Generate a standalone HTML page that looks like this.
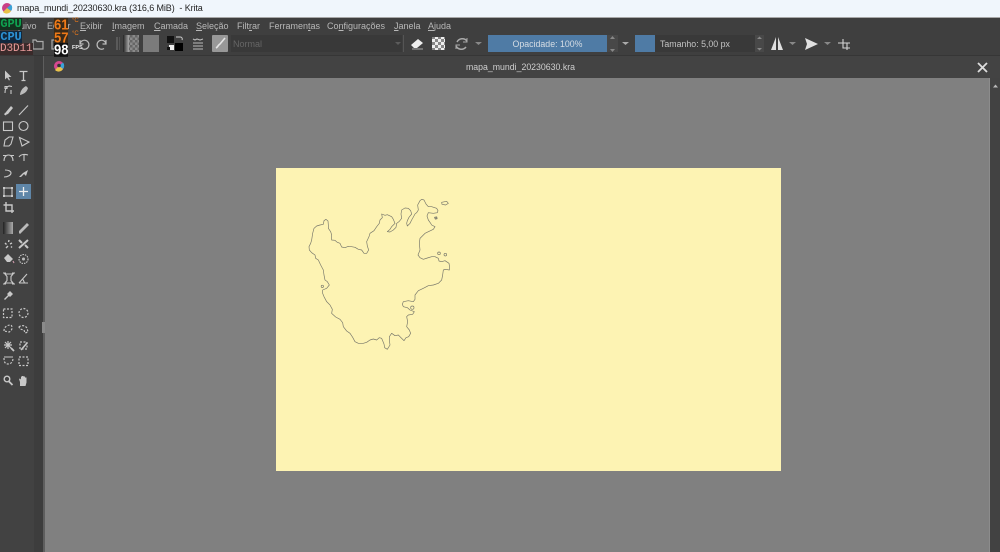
<!DOCTYPE html>
<html><head><meta charset="utf-8"><style>
*{margin:0;padding:0;box-sizing:border-box}
html,body{width:1000px;height:552px;overflow:hidden;background:#414141;font-family:"Liberation Sans",sans-serif}
#w{position:absolute;left:0;top:0;width:1000px;height:552px;filter:blur(.35px)}
.a{position:absolute;white-space:nowrap}
.m{top:20px;font-size:9px;color:#b8b8b8;line-height:12px}
.m u{text-decoration-thickness:1px}
svg{position:absolute;left:0;top:0}
.o{font-family:"Liberation Mono",monospace;font-weight:bold;line-height:12px}
.n{font-family:"Liberation Sans",sans-serif;font-weight:bold;font-size:13px;line-height:12px;transform:scaleY(1.15);transform-origin:left top}
</style></head><body><div id="w">
<div class="a" style="left:0;top:0;width:1000px;height:17px;background:#f0f6fc"></div>
<div class="a" style="left:0;top:17px;width:1000px;height:1px;background:#a8a8a8"></div>
<div class="a" style="left:0;top:18px;width:1000px;height:37px;background:#3f3f3f"></div>
<div class="a" style="left:0;top:55px;width:1000px;height:1px;background:#363636"></div>
<div class="a" style="left:0;top:56px;width:43px;height:496px;background:#424242"></div>
<div class="a" style="left:34px;top:56px;width:9px;height:496px;background:#3d3d3d"></div>
<div class="a" style="left:43px;top:56px;width:2px;height:496px;background:#5e5e5e"></div>
<div class="a" style="left:44px;top:56px;width:956px;height:22px;background:#434343"></div>
<div class="a" style="left:45px;top:78px;width:945px;height:474px;background:#808080"></div>
<div class="a" style="left:990px;top:78px;width:10px;height:474px;background:#424242"></div>
<div class="a" style="left:276px;top:168px;width:505px;height:303px;background:#fdf3b3"></div>
<div class="a" style="left:17px;top:2px;font-size:9px;line-height:13px;letter-spacing:-.1px;color:#222">mapa_mundi_20230630.kra (316,6 MiB)&nbsp; - Krita</div>

<div class="a m" style="left:6px">Arquivo</div>
<div class="a m" style="left:47px">Editar</div>
<div class="a m" style="left:80px"><u>E</u>xibir</div>
<div class="a m" style="left:112px"><u>I</u>magem</div>
<div class="a m" style="left:154px"><u>C</u>amada</div>
<div class="a m" style="left:196px"><u>S</u>eleção</div>
<div class="a m" style="left:237px">Filt<u>r</u>ar</div>
<div class="a m" style="left:269px">Ferramen<u>t</u>as</div>
<div class="a m" style="left:327px">Co<u>n</u>figurações</div>
<div class="a m" style="left:394px"><u>J</u>anela</div>
<div class="a m" style="left:428px"><u>A</u>juda</div>

<!-- toolbar controls -->
<div class="a" style="left:231px;top:35px;width:171px;height:17px;background:#393939"></div>
<div class="a" style="left:233px;top:38px;font-size:9px;color:#666;line-height:12px">Normal</div>
<div class="a" style="left:488px;top:35px;width:119px;height:17px;background:#4f7ba5"></div>
<div class="a" style="left:488px;top:38px;width:119px;text-align:center;font-size:8.8px;color:#d6dde4;line-height:12px">Opacidade: 100%</div>
<div class="a" style="left:607px;top:35px;width:11px;height:17px;background:#484848"></div>
<div class="a" style="left:635px;top:35px;width:20px;height:17px;background:#4f7ba5"></div>
<div class="a" style="left:655px;top:35px;width:100px;height:17px;background:#393939"></div>
<div class="a" style="left:660px;top:38px;font-size:8.8px;color:#c4c4c4;line-height:12px">Tamanho: 5,00 px</div>
<div class="a" style="left:755px;top:35px;width:9px;height:17px;background:#484848"></div>
<div class="a" style="left:466px;top:61px;width:109px;text-align:center;font-size:8.75px;color:#cfcfcf;line-height:12px">mapa_mundi_20230630.kra</div>

<svg width="1000" height="552" viewBox="0 0 1000 552" fill="none">
<defs>
<linearGradient id="g" x1="0" x2="1" y1="0" y2="0"><stop offset="0" stop-color="#222"/><stop offset="1" stop-color="#aaa"/></linearGradient>
<pattern id="ck" width="6" height="6" patternUnits="userSpaceOnUse"><rect width="6" height="6" fill="#eee"/><rect width="3" height="3" fill="#888"/><rect x="3" y="3" width="3" height="3" fill="#888"/></pattern>
<pattern id="ck2" width="5" height="5" patternUnits="userSpaceOnUse"><rect width="5" height="5" fill="#8a8a8a"/><rect width="2.500" height="2.500" fill="#666"/><rect x="2.500" y="2.500" width="2.500" height="2.500" fill="#666"/></pattern>
</defs>

<!-- krita logo titlebar -->
<circle cx="7" cy="8" r="5" fill="#c93f87"/><path d="M7 8L11 4.500A5 5 0 0 1 11 11Z" fill="#3aa3d8"/><path d="M7 8L3 12A5 5 0 0 0 11 11Z" fill="#e8c24a"/>

<!-- toolbar left -->
<path d="M33 40h3l1 1.500h6v7.500h-10z" stroke="#aaa" stroke-width="1.200"/>
<path d="M52 40h3l1 1.500h6v7.500h-10z" stroke="#aaa" stroke-width="1.200"/>
<path d="M80 44a4.500 4.500 0 1 1 2 4.500M80 40v4h3.500" stroke="#bbb" stroke-width="1.200"/>
<path d="M106 44a4.500 4.500 0 1 0 -2 4.500M106 40v4h-3.500" stroke="#bbb" stroke-width="1.200"/>
<rect x="116" y="37" width="2" height="13" fill="#5a5a5a"/><rect x="119" y="37" width="1" height="13" fill="#555"/>
<rect x="123" y="35" width="6" height="17" fill="url(#g)"/><rect x="129" y="35" width="10" height="17" fill="url(#ck2)"/>
<rect x="143" y="35" width="16" height="17" fill="#7b7b7b"/>
<rect x="167" y="36" width="7" height="7" fill="#111"/><rect x="175" y="43" width="8" height="8" fill="#000"/><rect x="169" y="45" width="5" height="5" fill="#eee"/><rect x="167" y="47" width="3" height="3" fill="#111"/>
<path d="M176 37h4a2 2 0 0 1 2 3" stroke="#ccc"/>
<path d="M193 39l2 1 2-1 3 1 3-1M193 43h10M193 46h10M193 49h10" stroke="#bbb" stroke-width="1.100"/>
<rect x="212" y="35" width="16" height="17" rx="1" fill="#989898"/><path d="M216 48c2-1 2-3 4-4l5-6" stroke="#e4e4e4" stroke-width="1.600"/>
<path d="M395 42l3 3 3-3z" fill="#5c5c5c"/>
<rect x="403" y="35" width="1" height="17" fill="#555"/>
<!-- eraser -->
<path d="M411 45l7-6 5 4-6 5h-3z" fill="#eee"/><path d="M412 49h11" stroke="#aaa"/>
<rect x="432" y="37" width="13" height="13" fill="url(#ck)"/>
<path d="M467 41a6 6 0 0 0-10 1M456 46a6 6 0 0 0 10 1" stroke="#aaa" stroke-width="1.500"/><path d="M467 38v4h-4M456 49v-4h4" stroke="#aaa"/>
<path d="M475 42l3.500 3 3.500-3z" fill="#888"/>
<path d="M610 38l2.500-3 2.500 3zM610 48l2.500 3 2.500-3z" fill="#888" transform="translate(0,1)"/>
<path d="M622 42l3.500 3 3.500-3z" fill="#aaa"/>
<path d="M757 39l2.500-2.500 2.500 2.500zM757 48l2.500 2.500 2.500-2.500z" fill="#888"/>
<path d="M771 50l5-13v13zM778 37l5 13h-5z" fill="#e0e0e0"/>
<path d="M789 42l3.500 3 3.500-3z" fill="#888"/>
<path d="M805 38l13 6-13 6 2-6z" fill="#e0e0e0"/>
<path d="M824 42l3.500 3 3.500-3z" fill="#888"/>
<path d="M838 43h12M843 39v9h7M847 43v7" stroke="#d4d4d4" stroke-width="1.100"/>

<!-- doc tab -->
<circle cx="59" cy="66" r="5" fill="#d6478f"/><path d="M59 66L63 62.500A5 5 0 0 1 63 69Z" fill="#3aa3d8"/><path d="M59 66L55 70A5 5 0 0 0 63 69Z" fill="#e8c24a"/><circle cx="59" cy="65.500" r="1.800" fill="#333"/>
<path d="M978 63l9 9M987 63l-9 9" stroke="#ddd" stroke-width="1.800"/>
<path d="M995 87.500l2.500-3 2.500 3z" fill="#bbb" transform="translate(-2,0)"/>
<rect x="989" y="78" width="1" height="474" fill="#8c8c8c"/>
<rect x="42" y="322" width="3" height="11" fill="#8a8a8a"/>

<!-- tools -->
<rect x="16" y="184" width="15" height="15" fill="#5f86a8"/>
<g stroke="#c8c8c8" stroke-width="1.100">
<path d="M5 70.500v9l2-2 2 3 1-.5-1.500-3h3z" fill="#c8c8c8" stroke="none"/>
<path d="M19.500 71.500h8M23.500 71.500v9M21.500 80.500h4" stroke-width="1.300"/>
<path d="M5 93c0-4 1-6 4-7l3 .5M5 86.500h2v2h-2zM11 90v4"/>
<path d="M20 95c0-3 2-7 6-9l2 2c-1 4-4 6-8 7z" fill="#bbb" stroke="none"/>
<path d="M5 115l3-1 5-6-2-2-5 6z" fill="#c8c8c8" stroke="none"/><path d="M5 115l1-2" stroke-width="2"/>
<path d="M19 115l9-9.500"/>
<rect x="3.500" y="122" width="9" height="8.500"/>
<circle cx="23.500" cy="126" r="4.500"/>
<path d="M4 146l1-6 4-3h4l-2 7-2 2z"/>
<path d="M19.500 137.500l9.500 4.500-7 4-2.500-8.500z"/>
<path d="M4 161c0-4 2-6 4.500-6s4.500 2 4.500 6M3 155.500h3M11 155.500h3"/>
<path d="M19 157c2-3 6-3 9-2M24 155v6"/>
<path d="M4 177c4 0 7-2 7-4s-3-3-6-3"/>
<path d="M19 177l4-4 5-3-2 6-2-2-3 3z" fill="#c8c8c8" stroke="none"/>
<rect x="4" y="188" width="8" height="8"/><path d="M3 187h2v2H3zM11 187h2v2h-2zM3 195h2v2H3zM11 195h2v2h-2z" fill="#c8c8c8" stroke="none"/>
<path d="M23.500 187v9M19 191.500h9" stroke="#eee" stroke-width="1.300"/>
<path d="M6 202v9h8M3.500 205h8.500v8" stroke-width="1.400"/>
<path d="M19 233l1 1 7-7-2-2-6 6z M25 225l2-2 2 2-2 2z" fill="#bbb" stroke="none"/>
<path d="M5 243l1.500 1.500M9 240l-.5 2M12 243l-2 1M6 248l2-2M11 246.500l1 1" stroke-width="1.400"/>
<path d="M19 248l9-8M19 240l3 3M28 248l-3-3" stroke-width="2"/>
<path d="M4 258l4-4 5 5-3 3h-3z" fill="#c8c8c8" stroke="none"/><path d="M13 261l1 2" stroke="#c9a"/>
<circle cx="23.500" cy="259" r="4.500" stroke-dasharray="1.500 1"/><circle cx="23.500" cy="259" r="1.500" fill="#bbb" stroke="none"/>
<path d="M5 274l2 2.500v4l-2 2.500h8l-2-2.500v-4l2-2.500zM3 273h3M12 273h3M3 284h3M12 284h3"/>
<path d="M19 283l8-9M19 283h9M23 279.500l1.500 3.500"/>
<path d="M4 299l4-4 -1-1 3-3 3 3-3 3-1-1-4 4z" fill="#c8c8c8" stroke="none"/>
</g>
<rect x="3" y="222" width="10" height="12" fill="url(#g)"/>
<g stroke="#c8c8c8" stroke-width="1.200" stroke-dasharray="2 1.500" fill="none">
<rect x="3.500" y="309" width="8.500" height="8.500"/>
<circle cx="23.500" cy="313" r="4.500"/>
<path d="M4 331c0-4 3-6 7-6 2 2 1 6-2 7z"/>
<path d="M19 327c2-2 6-2 8 1l1 4-3 1-1-3-4-1z"/>
<path d="M20 342h7v7h-7z"/>
<path d="M4 358c0 4 1 6 4 6s5-2 5-6"/>
<rect x="19" y="357" width="9" height="8.500"/>
</g>
<g stroke="#c8c8c8" fill="#c8c8c8">
<path d="M4 345h8M8 341v8M5 342l6 6M11 342l-6 6" stroke-width="1.200"/>
<path d="M11 348l3 3" stroke-width="1.800"/>
<path d="M21 350l6-7" stroke-width="1.600"/>
<path d="M4 357h9" stroke-width="1"/>
<circle cx="7" cy="379" r="2.800" fill="none" stroke-width="1.400"/>
<path d="M9 381.500l3.500 3.500" stroke-width="1.800"/>
<path d="M20 386v-4l-1-3 1-.5 1 1v-3h1v-.5h1.500v.5h1.500v1h1.500v5l-1 3.500z" stroke="none"/>
</g>

<!-- map -->
<g transform="translate(300,190) scale(.33333)" stroke="#77776a" stroke-width="2" stroke-linejoin="round" stroke-linecap="round">
<path d="M28 180L27 170L32 160L35 150L38 130L42 115L50 108L60 105L70 103L72 92L78 88L84 93L85 105L85 115L92 125L95 135L95 150L105 151L112 157L120 160L125 171L135 173L145 169L155 170L165 172L175 178L185 180L192 190L200 190L206 180L202 168L200 155L207 140L210 130L222 122L230 110L238 100L240 90L247 83L245 72L255 76L262 74L275 80L280 88L285 100L275 110L270 118L262 125L270 126L280 120L288 112L290 100L298 94L305 85L303 72L305 60L315 54L325 55L332 62L335 72L327 82L322 92L320 100L322 108L330 100L335 90L345 72L350 68L355 60L353 45L360 32L365 28L372 30L378 42L385 50L395 50L410 55L414 62L412 68L400 70L385 68L381 78L385 90L392 100L395 105L405 110L400 118L385 125L375 130L360 145L358 160L360 180L354 195L360 203L370 208L382 204L395 200L405 200L415 205L417 213L425 215L435 212L447 220L449 232L448 240L436 238L430 240L428 255L425 270L415 280L400 285L385 287L370 295L355 302L345 315L345 328L340 335L325 332L310 335L307 343L310 350L322 353L330 360L343 365L338 373L325 375L320 380L323 395L320 410L328 420L332 430L326 440L318 443L312 452L305 445L295 435L285 437L275 430L268 440L268 450L270 465L262 478L254 473L252 462L245 445L238 443L230 450L220 447L210 450L200 457L190 460L175 460L165 455L158 442L150 430L140 423L130 410L128 398L120 388L107 381L95 370L97 358L90 345L80 335L72 320L68 310L68 300L80 295L88 285L82 275L75 270L72 255L70 240L62 225L55 210L47 205L45 195L35 188Z"/>
<path d="M425 37L440 34L445 40L437 45L426 43Z"/>
<path d="M404 82L410 81L411 86L406 87Z" stroke-width="3"/>
<circle cx="417" cy="190" r="4"/><circle cx="436" cy="194" r="4"/>
<circle cx="337" cy="353" r="5"/>
<circle cx="67" cy="289" r="3.500"/>
</g>
</svg>

<!-- hardware overlay above the menu -->
<div class="a o" style="left:0;top:18px;width:22px;height:12px;font-size:12px;letter-spacing:-.1px;color:#0fa350;background:#14321f;text-align:center">GPU</div>
<div class="a o" style="left:0;top:31px;width:22px;height:12px;font-size:12px;letter-spacing:-.1px;color:#2c92d6;background:#12283d;text-align:center">CPU</div>
<div class="a o" style="left:0;top:43px;font-size:11px;font-weight:normal;color:#e89a9a;background:#3a2a2a;letter-spacing:-.1px">D3D11</div>
<div class="a n" style="left:54px;top:18px;color:#f07a18;background:#3a2a18">61</div>
<div class="a" style="left:72px;top:18px;font-size:6px;color:#f07a18">°C</div>
<div class="a n" style="left:54px;top:31px;color:#f07a18;background:#3a2a18">57</div>
<div class="a" style="left:72px;top:31px;font-size:6px;color:#f07a18">°C</div>
<div class="a n" style="left:54px;top:43px;color:#fff;background:#111">98</div>
<div class="a" style="left:72px;top:45px;font-size:5.500px;color:#eee;font-weight:bold">FPS</div>
</div></body></html>
